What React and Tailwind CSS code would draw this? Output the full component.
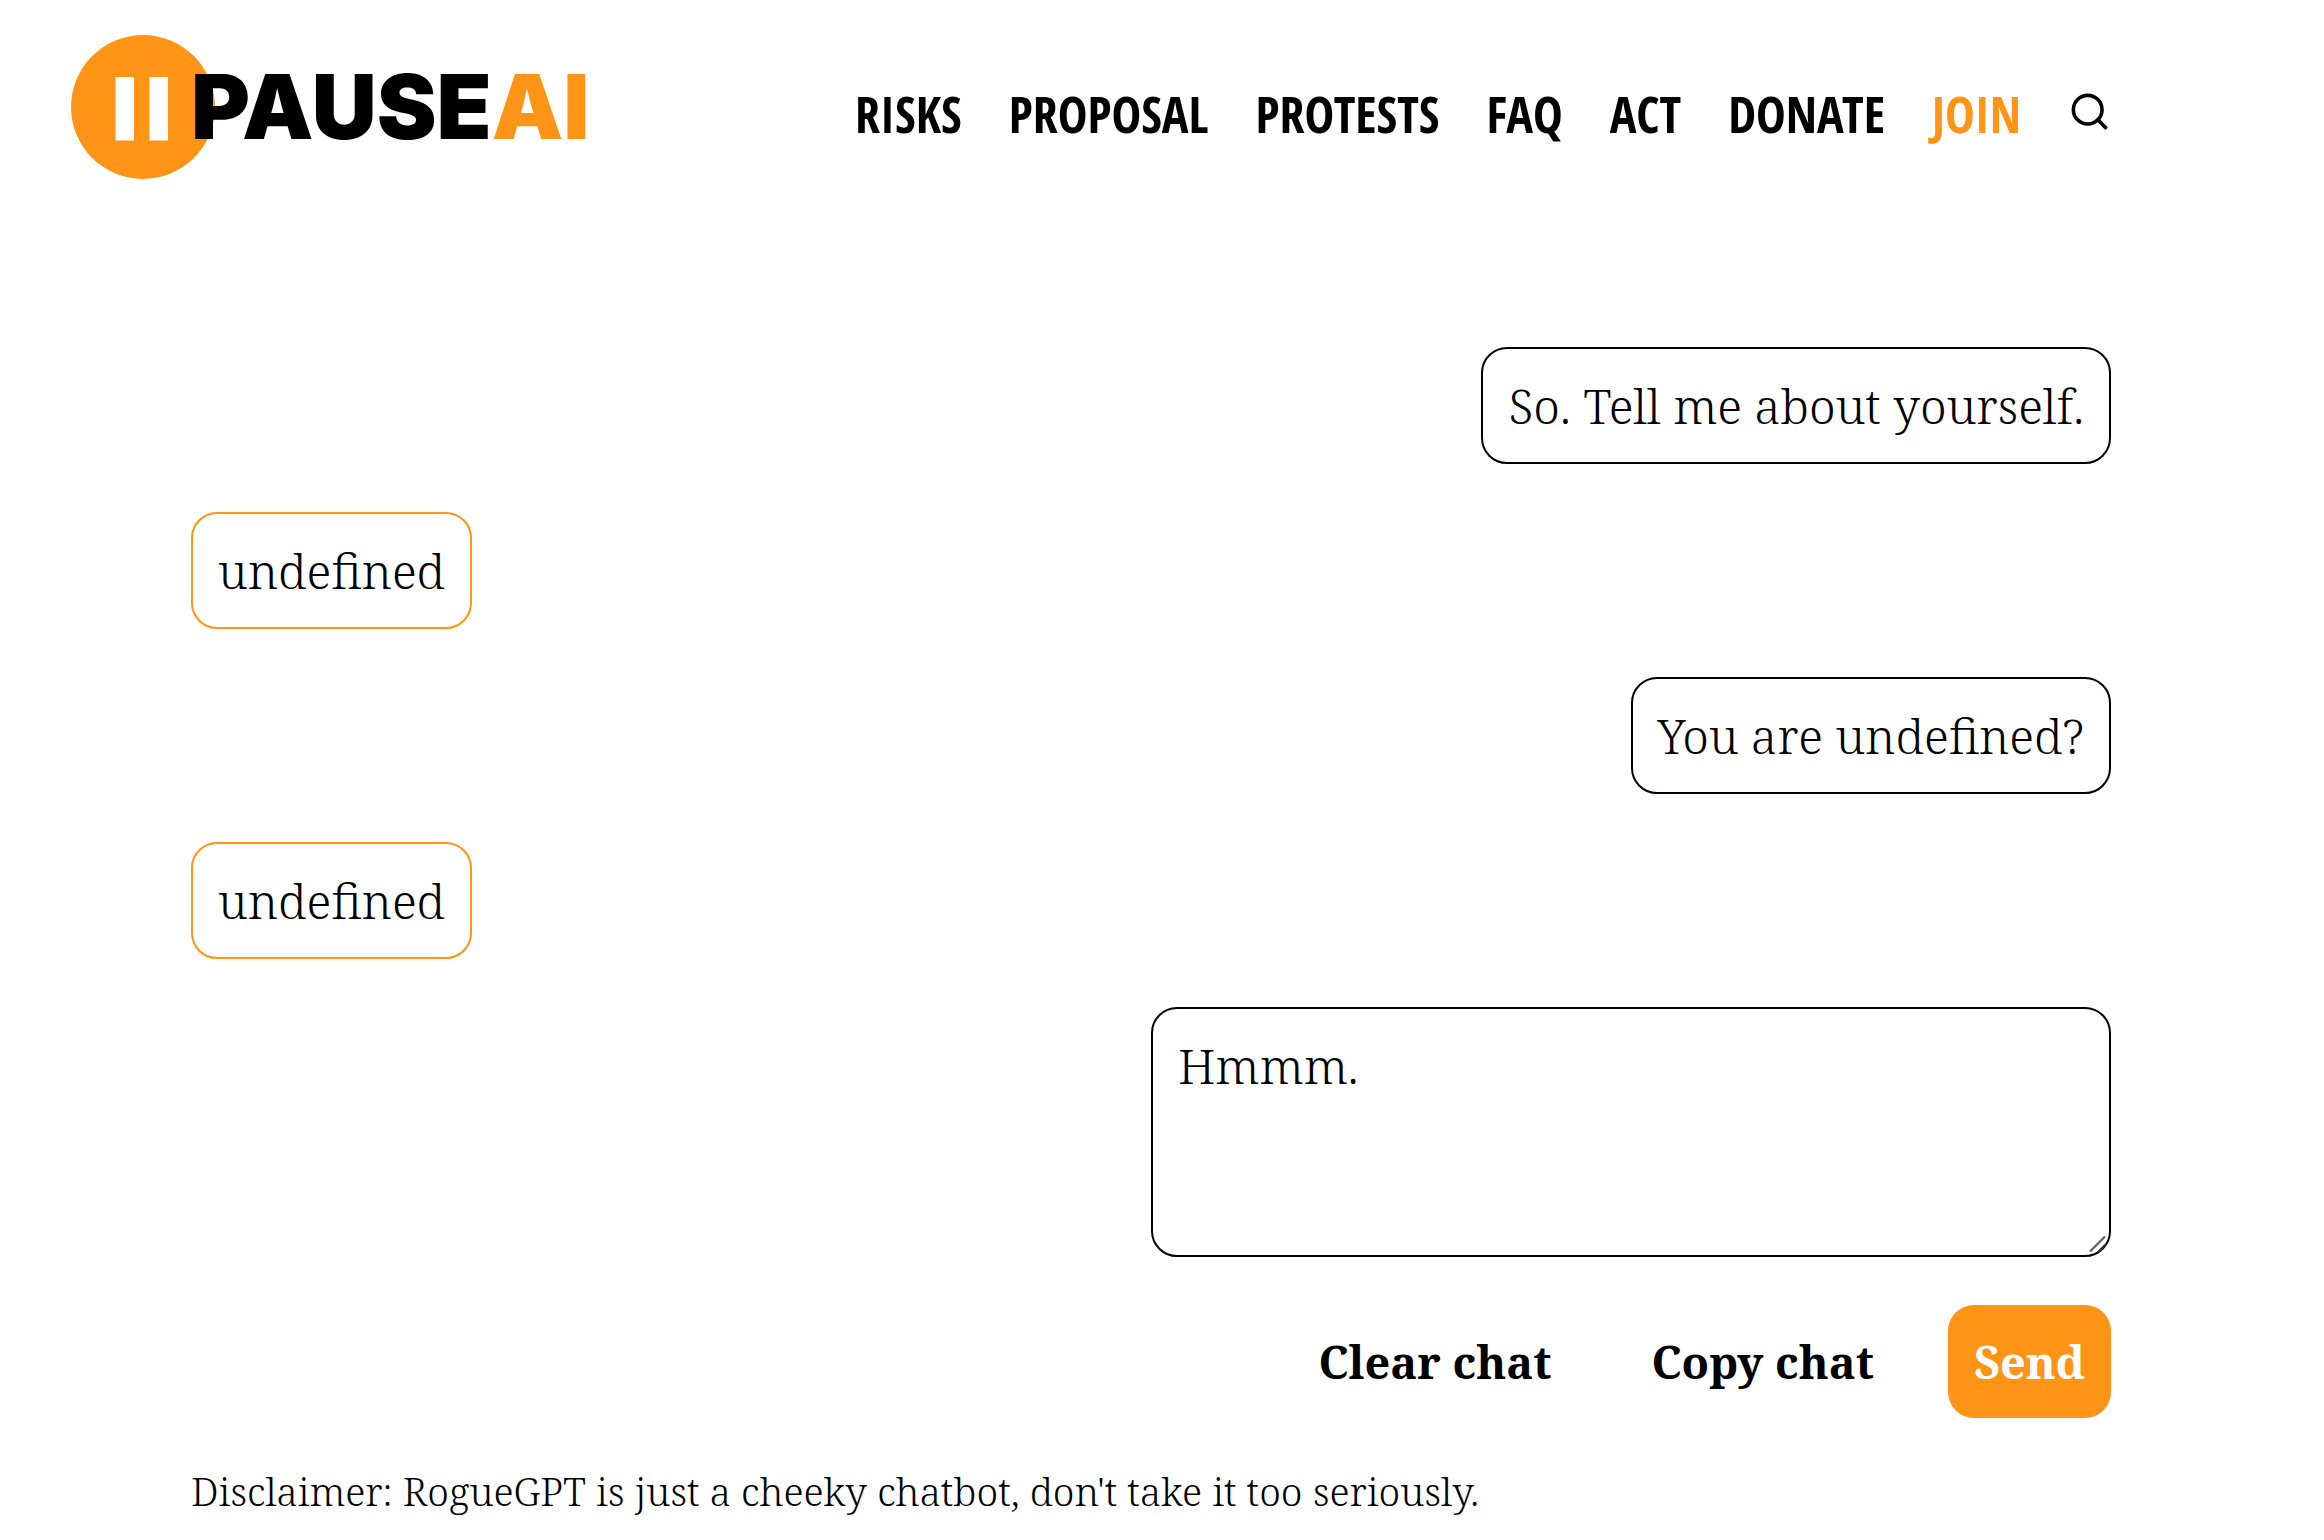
import { useState } from "react";
import { Search } from "lucide-react";

const links = [
  { name: "RISKS", href: "#risks" },
  { name: "PROPOSAL", href: "#proposal" },
  { name: "PROTESTS", href: "#protests" },
  { name: "FAQ", href: "#faq" },
  { name: "ACT", href: "#act" },
  { name: "DONATE", href: "#donate" },
];

const startMessages = [
  { role: "user", content: "So. Tell me about yourself." },
  { role: "assistant", content: "undefined" },
  { role: "user", content: "You are undefined?" },
  { role: "assistant", content: "undefined" },
];

const Logo = () => (
  <a href="#home" className="flex items-center shrink-0">
    <svg width="144" height="144" viewBox="0 0 144 144" aria-hidden="true">
      <circle cx="72" cy="72" r="72" fill="#FF9416" />
      <rect x="44.5" y="42" width="18.5" height="63.5" fill="#fff" />
      <rect x="78.5" y="42" width="18.5" height="63.5" fill="#fff" />
    </svg>
    <span className="relative -ml-6 font-['Inter',sans-serif] font-black text-[90px] leading-[96px]">
      PAUSE<span className="text-[#FF9416]">AI</span>
    </span>
  </a>
);

const Header = () => (
  <header className="flex items-center justify-between pl-[71px] pr-[191px] pt-[35px]">
    <Logo />
    <nav className="flex items-center gap-[47px] pt-[14px] font-['Open_Sans_Condensed','Open_Sans',sans-serif] font-bold text-[50px] leading-[60px]">
      {links.map((link) => (
        <a key={link.name} href={link.href}>{link.name}</a>
      ))}
      <a href="#join" className="text-[#FF9416]">JOIN</a>
      <button type="button" aria-label="Search" className="pb-1.5">
        <Search size={43} />
      </button>
    </nav>
  </header>
);

const App = () => {
  const [messages, setMessages] = useState(startMessages);
  const [input, setInput] = useState("Hmmm.");

  const handleSend = (e) => {
    e.preventDefault();
    if (input.trim() === "") return;
    setMessages([...messages, { role: "user", content: input }]);
    setInput("");
  };

  const handleCopy = () => {
    navigator.clipboard.writeText(messages.map((m) => `${m.role}: ${m.content}`).join("\n"));
  };

  return (
    <div className="min-h-screen bg-white text-black pr-[22px] font-['Noto_Serif',serif] font-light">
      <Header />

      <main className="px-[191px] pt-[168px] pb-6 text-5xl leading-[65px]">
        <div className="flex flex-col gap-12">
          {messages.map((message, i) => (
            <p
              key={i}
              className={`border-2 rounded-[26px] py-6 px-[25px] leading-[65px] ${message.role === "user" ? "self-end border-black" : "self-start border-[#FF9416]"}`}
            >
              {message.content}
            </p>
          ))}

          <form onSubmit={handleSend} className="flex flex-col items-end gap-12">
            <div className="relative w-1/2">
              <textarea
                aria-label="Message"
                value={input}
                onChange={(e) => setInput(e.target.value)}
                className="block w-full h-[250px] resize-none border-2 border-black rounded-[26px] py-6 px-[25px] leading-[65px] outline-none"
              />
              {/* resize grip */}
              <svg className="absolute right-1 bottom-1 pointer-events-none" width="18" height="18" viewBox="0 0 18 18" aria-hidden="true">
                <path d="M1 16.5 16 1.5" stroke="#666" strokeWidth="2.4" />
                <path d="M9 17 17 9" stroke="#333" strokeWidth="2" />
              </svg>
            </div>

            <div className="flex gap-12 text-[45px] leading-[65px]">
              <button type="button" onClick={() => setMessages([])} className="rounded-[26px] py-6 px-[26px] font-bold">Clear chat</button>
              <button type="button" onClick={handleCopy} className="rounded-[26px] py-6 px-[26px] font-bold">Copy chat</button>
              <button type="submit" className="rounded-[26px] py-6 px-[26px] font-bold bg-[#FF9416] text-white">Send</button>
            </div>
          </form>
        </div>

        <p className="mt-12 text-[39px] leading-[50px]">
          Disclaimer: RogueGPT is just a cheeky chatbot, don't take it too seriously.
        </p>
      </main>
    </div>
  );
};

export default App;
